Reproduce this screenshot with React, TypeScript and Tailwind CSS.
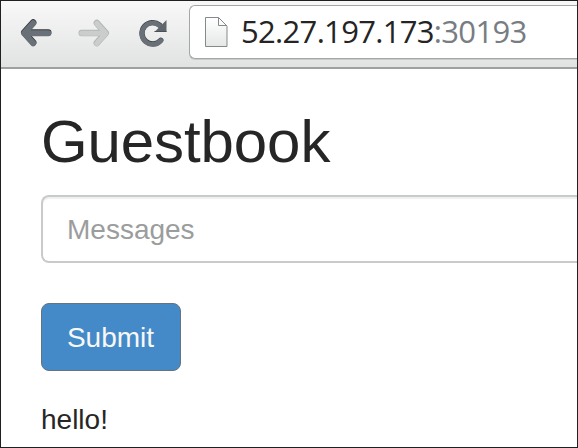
function BackIcon() {
  return (
    <svg width="32" height="28" viewBox="0 0 32 28" fill="none" strokeLinecap="round" strokeLinejoin="round">
      <path d="M13.2 4 L4.2 14 L13.2 24 M6 14 H28.3" transform="translate(0 -.5)" stroke="#33393d" strokeWidth="6.4" />
      <path d="M13.2 4 L4.2 14 L13.2 24 M6 14 H28.3" transform="translate(0 .3)" stroke="#697077" strokeWidth="6" />
    </svg>
  );
}

function ForwardIcon() {
  return (
    <svg width="32" height="28" viewBox="0 0 32 28" fill="none" strokeLinecap="round" strokeLinejoin="round">
      <path d="M18.8 4 L27.8 14 L18.8 24 M26 14 H3.7" stroke="#b3b6b6" strokeWidth="6.4" />
      <path d="M18.8 4 L27.8 14 L18.8 24 M26 14 H3.7" transform="translate(0 .3)" stroke="#cbcdcd" strokeWidth="5" />
    </svg>
  );
}

function ReloadIcon() {
  return (
    <svg width="28" height="28" viewBox="0 0 28 28" fill="none">
      <path d="M20.6 6 A10.7 10.7 0 1 0 21.8 21.2" stroke="#33393d" strokeWidth="5.2" strokeLinecap="round" />
      <path d="M20.6 6.6 A10.7 10.7 0 1 0 21.8 21.6" stroke="#697077" strokeWidth="4.8" strokeLinecap="round" />
      <path d="M27.5 1 V13 H15.5 Z" fill="#5f666c" />
      <path d="M15.5 12.5 H27.5" stroke="#4a5156" />
    </svg>
  );
}

function PageIcon() {
  return (
    <svg width="23" height="31" viewBox="0 0 23 31">
      <defs>
        <linearGradient id="paper" x1="0" y1="0" x2="0" y2="1">
          <stop offset="0" stopColor="#fff" />
          <stop offset="1" stopColor="#e5e7e7" />
        </linearGradient>
      </defs>
      <path d="M.5 .5 H13.5 L22 9 V29.5 H.5 Z" fill="url(#paper)" stroke="#85898b" />
      <path d="M13.5 .5 V8.5 H22" fill="none" stroke="#85898b" />
    </svg>
  );
}

export default function App() {
  return (
    <div className="flex h-[448px] w-[578px] flex-col overflow-hidden border border-[#202022] bg-white font-['Liberation_Sans',Arial,sans-serif] text-[28px] leading-10 text-[#262626]">
      <header className="flex h-[68px] shrink-0 items-start border-b-2 border-[#9fa1a1] bg-linear-to-b from-[#f8f8f8] to-[#e1e3e2]">
        <nav className="flex pt-[17.5px] pl-[19px]">
          <button aria-label="Back"><BackIcon /></button>
          <button aria-label="Forward" className="ml-[26px]"><ForwardIcon /></button>
          <button aria-label="Reload" className="ml-[29px]"><ReloadIcon /></button>
        </nav>
        <div className="mt-1 ml-[22px] flex h-[54px] flex-1 items-start rounded-l-[6px] border border-r-0 border-[#a5a7a7] bg-white shadow-[0_1px_0_#c9cbcb]">
          <span className="mt-[11px] ml-[15px] shrink-0"><PageIcon /></span>
          <span className="mt-[5px] ml-[13px] font-['Open_Sans','Noto_Sans',sans-serif] text-[31px] leading-10 tracking-[-0.68px] whitespace-nowrap text-[#242424]">
            52.27.197.173<span className="text-[#777d82]">:30193</span>
          </span>
        </div>
      </header>
      <main className="flex flex-col items-start pl-10">
        <h1 className="mt-[40px] text-[60px] leading-[66px] tracking-[-0.1px] whitespace-nowrap">Guestbook</h1>
        <input
          placeholder="Messages"
          className="mt-[20px] h-[68px] w-full rounded-l-[8px] border-2 border-r-0 border-[#c9cbcb] pt-0.5 pl-6 shadow-[inset_0_2px_1px_#eff1f1] outline-none placeholder:text-[#9b9d9d]"
        />
        <button className="mt-[40px] h-[68px] w-[140px] rounded-[8px] border border-[#64747f] bg-[#448ac8] pt-0.5 pr-px text-[#f7f7f5]">Submit</button>
        <p className="mt-[29px]">hello!</p>
      </main>
    </div>
  );
}
